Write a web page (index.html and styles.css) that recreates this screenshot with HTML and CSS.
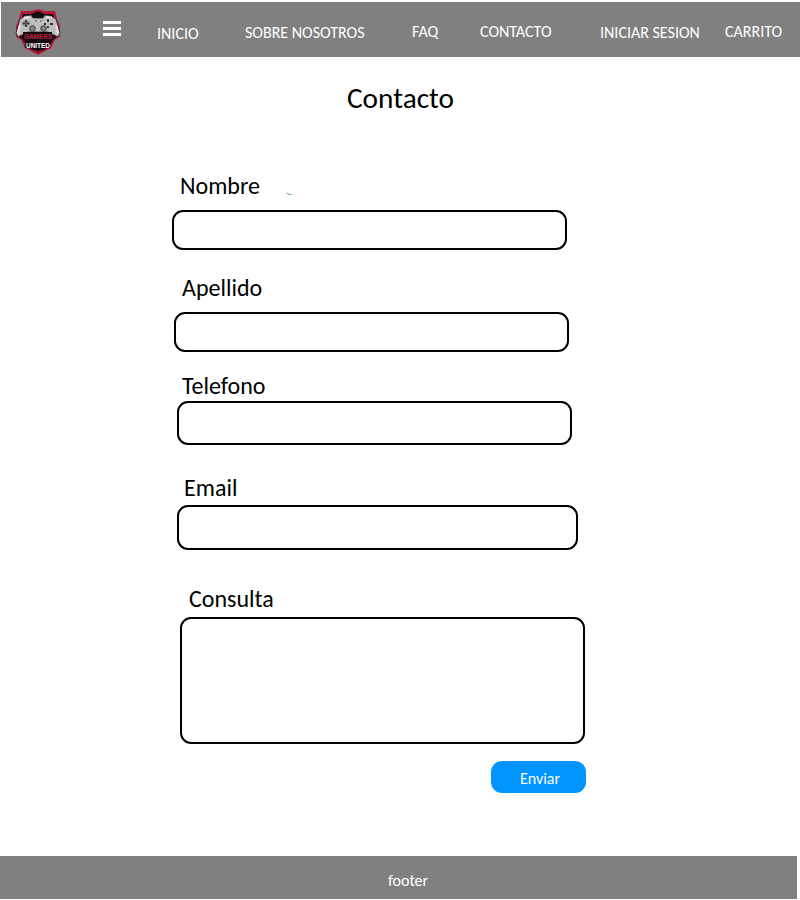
FILE: index.html
```
<!DOCTYPE html>
<html lang="es">
<head>
<meta charset="utf-8">
<title>Contacto</title>
<link rel="stylesheet" href="styles.css">
</head>
<body>
<header class="header">
  <a class="logo" href="#">
    <svg width="46" height="47" viewBox="0 0 46 47">
      <path d="M6 2H16L23 0L30 2H40L42 10L45 17L45 28L40 31L36 39L23 46L10 39L6 31L1 28V17L4 10Z" fill="#b9183c"/>
      <path d="M8 5H16L23 2L30 5H38L40 11L43 18V27L38 31L34 38L23 44L12 38L8 31L3 27V18L6 11Z" fill="#160d11"/>
      <path d="M10 7L16 6L18 9H28L30 6L36 7L41 10L45 24L43 28L37 25L33 23H13L9 25L3 28L1 24L5 10Z" fill="#bebebe" stroke="#2a2528" stroke-width=".8"/>
      <path d="M9 8.500H15M31 8.500H37M5 16L3 25M41 16L43 25" stroke="#e2e2e2" stroke-width="2"/>
      <path d="M11 11V18M7.500 14.500H14.500M33 10V13M33 17V19M29 15H31M35 15H38" stroke="#303030" stroke-width="1.800"/>
      <path d="M8.500 12L13.500 17M13.500 12L8.500 17" stroke="#777"/>
      <circle cx="17.500" cy="19.500" r="2.800" fill="#888" stroke="#333"/>
      <circle cx="28.500" cy="19.500" r="2.800" fill="#888" stroke="#333"/>
      <path d="M20 12H22M25 12H27" stroke="#777" stroke-width="1.500"/>
      <path d="M8 23H37V31H35V39H10V31H8Z" fill="#16090d"/>
      <text class="logo-top" x="9" y="30" textLength="28" lengthAdjust="spacingAndGlyphs">GAMERS</text>
      <text class="logo-bottom" x="11" y="38.500" textLength="24" lengthAdjust="spacingAndGlyphs">UNITED</text>
      <path d="M19 41L23 43L27 41" fill="none" stroke="#b9183c"/>
    </svg>
  </a>
  <button class="menu" aria-label="Menu"><i></i><i></i><i></i></button>
  <nav class="nav">
    <a class="inicio" href="#">INICIO</a>
    <a class="sobre" href="#">SOBRE NOSOTROS</a>
    <a class="faq" href="#">FAQ</a>
    <a class="contacto" href="#">CONTACTO</a>
    <a class="sesion" href="#">INICIAR SESION</a>
    <a class="carrito" href="#">CARRITO</a>
  </nav>
</header>
<main class="main">
  <h1 class="title">Contacto</h1>
  <form class="form">
    <div class="field nombre"><label for="n">Nombre</label><svg class="mark" width="8" height="3" viewBox="0 0 8 3"><path d="M0 .500H3M2 1.500H6" fill="none" stroke="#58a8a8" stroke-opacity=".75"/></svg><input id="n"></div>
    <div class="field apellido"><label for="a">Apellido</label><input id="a"></div>
    <div class="field telefono"><label for="t">Telefono</label><input id="t"></div>
    <div class="field email"><label for="e">Email</label><input id="e"></div>
    <div class="field consulta"><label for="c">Consulta</label><textarea id="c"></textarea></div>
    <button class="send" type="button">Enviar</button>
  </form>
</main>
<footer class="footer"><span>footer</span></footer>
</body>
</html>
```
FILE: styles.css
```
* { box-sizing: border-box; }
body { margin: 0; width: 800px; height: 900px; overflow: hidden; display: flex; flex-direction: column; background: #fff; color: #000; font-family: Carlito, Lato, sans-serif; }
.header { display: flex; flex: none; height: 55px; margin: 2px 0 0 1px; background: #808080; }
.logo { display: block; width: 46px; height: 47px; margin: 7px 0 0 14px; }
.logo svg { display: block; }
.logo-top, .logo-bottom { font: bold 8px "Liberation Sans", sans-serif; }
.logo-top { fill: #c22448; }
.logo-bottom { fill: #fff; }
.menu { display: flex; flex-direction: column; gap: 3px; width: 18px; margin: 19px 0 0 42px; padding: 0; border: 0; background: none; }
.menu i { width: 18px; height: 3px; background: #fff; }
.nav { display: flex; margin-left: 36px; padding-top: 21px; white-space: nowrap; font-size: 16px; line-height: 20px; }
.nav a { flex: none; color: #fff; text-decoration: none; }
.inicio { width: 88px; padding-top: 1px; }
.sobre { width: 167px; }
.faq { width: 68px; margin-top: -1px; }
.contacto { width: 120px; margin-top: -1px; }
.sesion { width: 125px; }
.carrito { width: 60px; margin-top: -1px; }
.main { flex: none; height: 799px; }
.title { margin: 23px 0 0 347px; font-size: 29.3px; line-height: 36px; font-weight: 400; }
.form { display: flex; flex-direction: column; }
.field { display: flex; flex-wrap: wrap; align-content: flex-start; }
.field label { height: 30px; font-size: 24px; line-height: 28px; }
.field input, .field textarea { display: block; padding: 0 12px; border: 2px solid #000; border-radius: 11px; background: #fff; font: 20px Carlito, Lato, sans-serif; outline: 0; resize: none; }
.nombre { width: 395px; margin: 56px 0 0 172px; }
.nombre label { width: 114px; padding-left: 8px; }
.mark { margin-top: 21px; }
.nombre input { width: 395px; height: 40px; margin-top: 8px; }
.apellido { width: 395px; margin: 24px 0 0 174px; }
.apellido label { width: 100%; padding-left: 8px; }
.apellido input { width: 395px; height: 40px; margin-top: 8px; }
.telefono { width: 395px; margin: 20px 0 0 177px; }
.telefono label { width: 100%; padding-left: 5px; }
.telefono input { width: 395px; height: 44px; margin-top: -1px; }
.email { width: 401px; margin: 29px 0 0 177px; }
.email label { width: 100%; padding-left: 7px; }
.email input { width: 401px; height: 45px; margin-top: 1px; }
.consulta { width: 405px; margin: 35px 0 0 180px; }
.consulta label { width: 100%; padding-left: 9px; }
.consulta textarea { width: 405px; height: 127px; margin-top: 2px; }
.send { width: 95px; height: 32px; margin: 17px 0 0 491px; padding: 2px 0 0 3px; border: 0; border-radius: 11px; background: #0094ff; color: #fff; font: 16px Carlito, Lato, sans-serif; }
.footer { flex: none; width: 797px; height: 43px; padding: 15px 0 0 388px; background: #808080; color: #fff; font-size: 16px; line-height: 20px; }
```
